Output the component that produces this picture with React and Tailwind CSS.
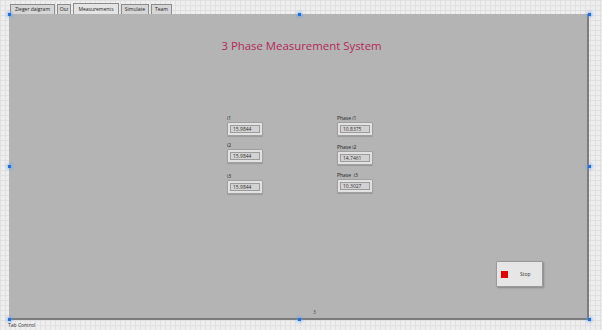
const font = { fontFamily: '"Open Sans", "Liberation Sans", sans-serif' };

function Handle({ className }) {
    return (
        <div
            className={`absolute w-[3px] h-[3px] bg-[#1f6fd6] shadow-[0_0_3px_1px_rgba(90,160,255,0.6)] ${className}`}
        />
    );
}

function Tab({ label, w, active }) {
    return (
        <div
            className={`${w} flex items-center justify-center border border-b-0 border-[#8c8c8c] text-[5px] text-[#222] leading-none ${
                active ? 'h-[11px] bg-[#e4e4e4]' : 'h-[10px] bg-[#d6d6d6]'
            }`}
        >
            {label}
        </div>
    );
}

function NumBox({ value }) {
    return (
        <div className="w-[36px] h-[14px] bg-[#e2e2e2] border border-[#a0a0a0] rounded-[1px] p-[2px] shadow-[0_1px_1px_rgba(0,0,0,0.15)]">
            <div className="h-full border border-[#9c9c9c] bg-[#d2d2d2] flex items-center pl-[2px] text-[5px] text-[#333] leading-none">
                {value}
            </div>
        </div>
    );
}

export default function App() {
    return (
        <div
            style={font}
            className="relative w-[602px] h-[330px] overflow-hidden bg-[#eeeeee] bg-[linear-gradient(to_right,#e0e0e0_1px,transparent_1px),linear-gradient(to_bottom,#e0e0e0_1px,transparent_1px)] bg-[size:5px_5px]"
        >
            <div className="flex flex-col pl-[9px] pt-[3px]">
                <div className="flex items-end gap-[2px] pl-[1px] h-[11px]">
                    <Tab label="Zieger daigram" w="w-[45px]" />
                    <Tab label="Osz" w="w-[14px]" />
                    <Tab label="Measurements" w="w-[46px]" active />
                    <Tab label="Simulate" w="w-[28px]" />
                    <Tab label="Team" w="w-[21px]" />
                </div>
                <div className="w-[580px] h-[306px] bg-[#b4b4b4] border-r-2 border-b-2 border-[#7c7c7c] flex flex-col">
                    <div className="mt-[25px] pl-[7px] text-center text-[11.4px] leading-[14px] text-[#b3285a]">
                        3 Phase Measurement System
                    </div>
                    <div className="flex ml-[218px] mt-[62px] gap-[74px] text-[5px] leading-[6px] text-[#222]">
                        <div className="flex flex-col">
                            <div className="mb-[1px]">i1</div>
                            <NumBox value="15.9844" />
                            <div className="mt-[6px] mb-[1px]">i2</div>
                            <NumBox value="15.9844" />
                            <div className="mt-[10px] mb-[1px]">i3</div>
                            <NumBox value="15.9844" />
                        </div>
                        <div className="flex flex-col">
                            <div className="mb-[1px]">Phase i1</div>
                            <NumBox value="10.8375" />
                            <div className="mt-[8px] mb-[1px]">Phase i2</div>
                            <NumBox value="14.7461" />
                            <div className="mt-[7px] mb-[1px]">Phase&nbsp; i3</div>
                            <NumBox value="10.3027" />
                        </div>
                    </div>
                    <div className="ml-[487px] mt-[67px] w-[47px] h-[26px] bg-[#e6e6e6] border border-[#9a9a9a] rounded-[1px] shadow-[1px_1px_2px_rgba(0,0,0,0.25)] flex items-center pl-[4px]">
                        <div className="w-[7px] h-[7px] bg-[#e60000]" />
                        <div className="ml-[12px] text-[5px] leading-none text-[#333]">Stop</div>
                    </div>
                    <div className="mt-auto mb-[3px] ml-[304px] text-[5px] leading-none text-[#444]">3</div>
                </div>
                <div className="text-[5px] leading-none text-[#333] mt-[3px] -ml-[1px]">Tab Control</div>
            </div>
            <Handle className="left-[8px] top-[13px]" />
            <Handle className="left-[298px] top-[13px]" />
            <Handle className="left-[588px] top-[13px]" />
            <Handle className="left-[8px] top-[165px]" />
            <Handle className="left-[588px] top-[165px]" />
            <Handle className="left-[8px] top-[318px]" />
            <Handle className="left-[298px] top-[318px]" />
            <Handle className="left-[588px] top-[318px]" />
        </div>
    );
}
